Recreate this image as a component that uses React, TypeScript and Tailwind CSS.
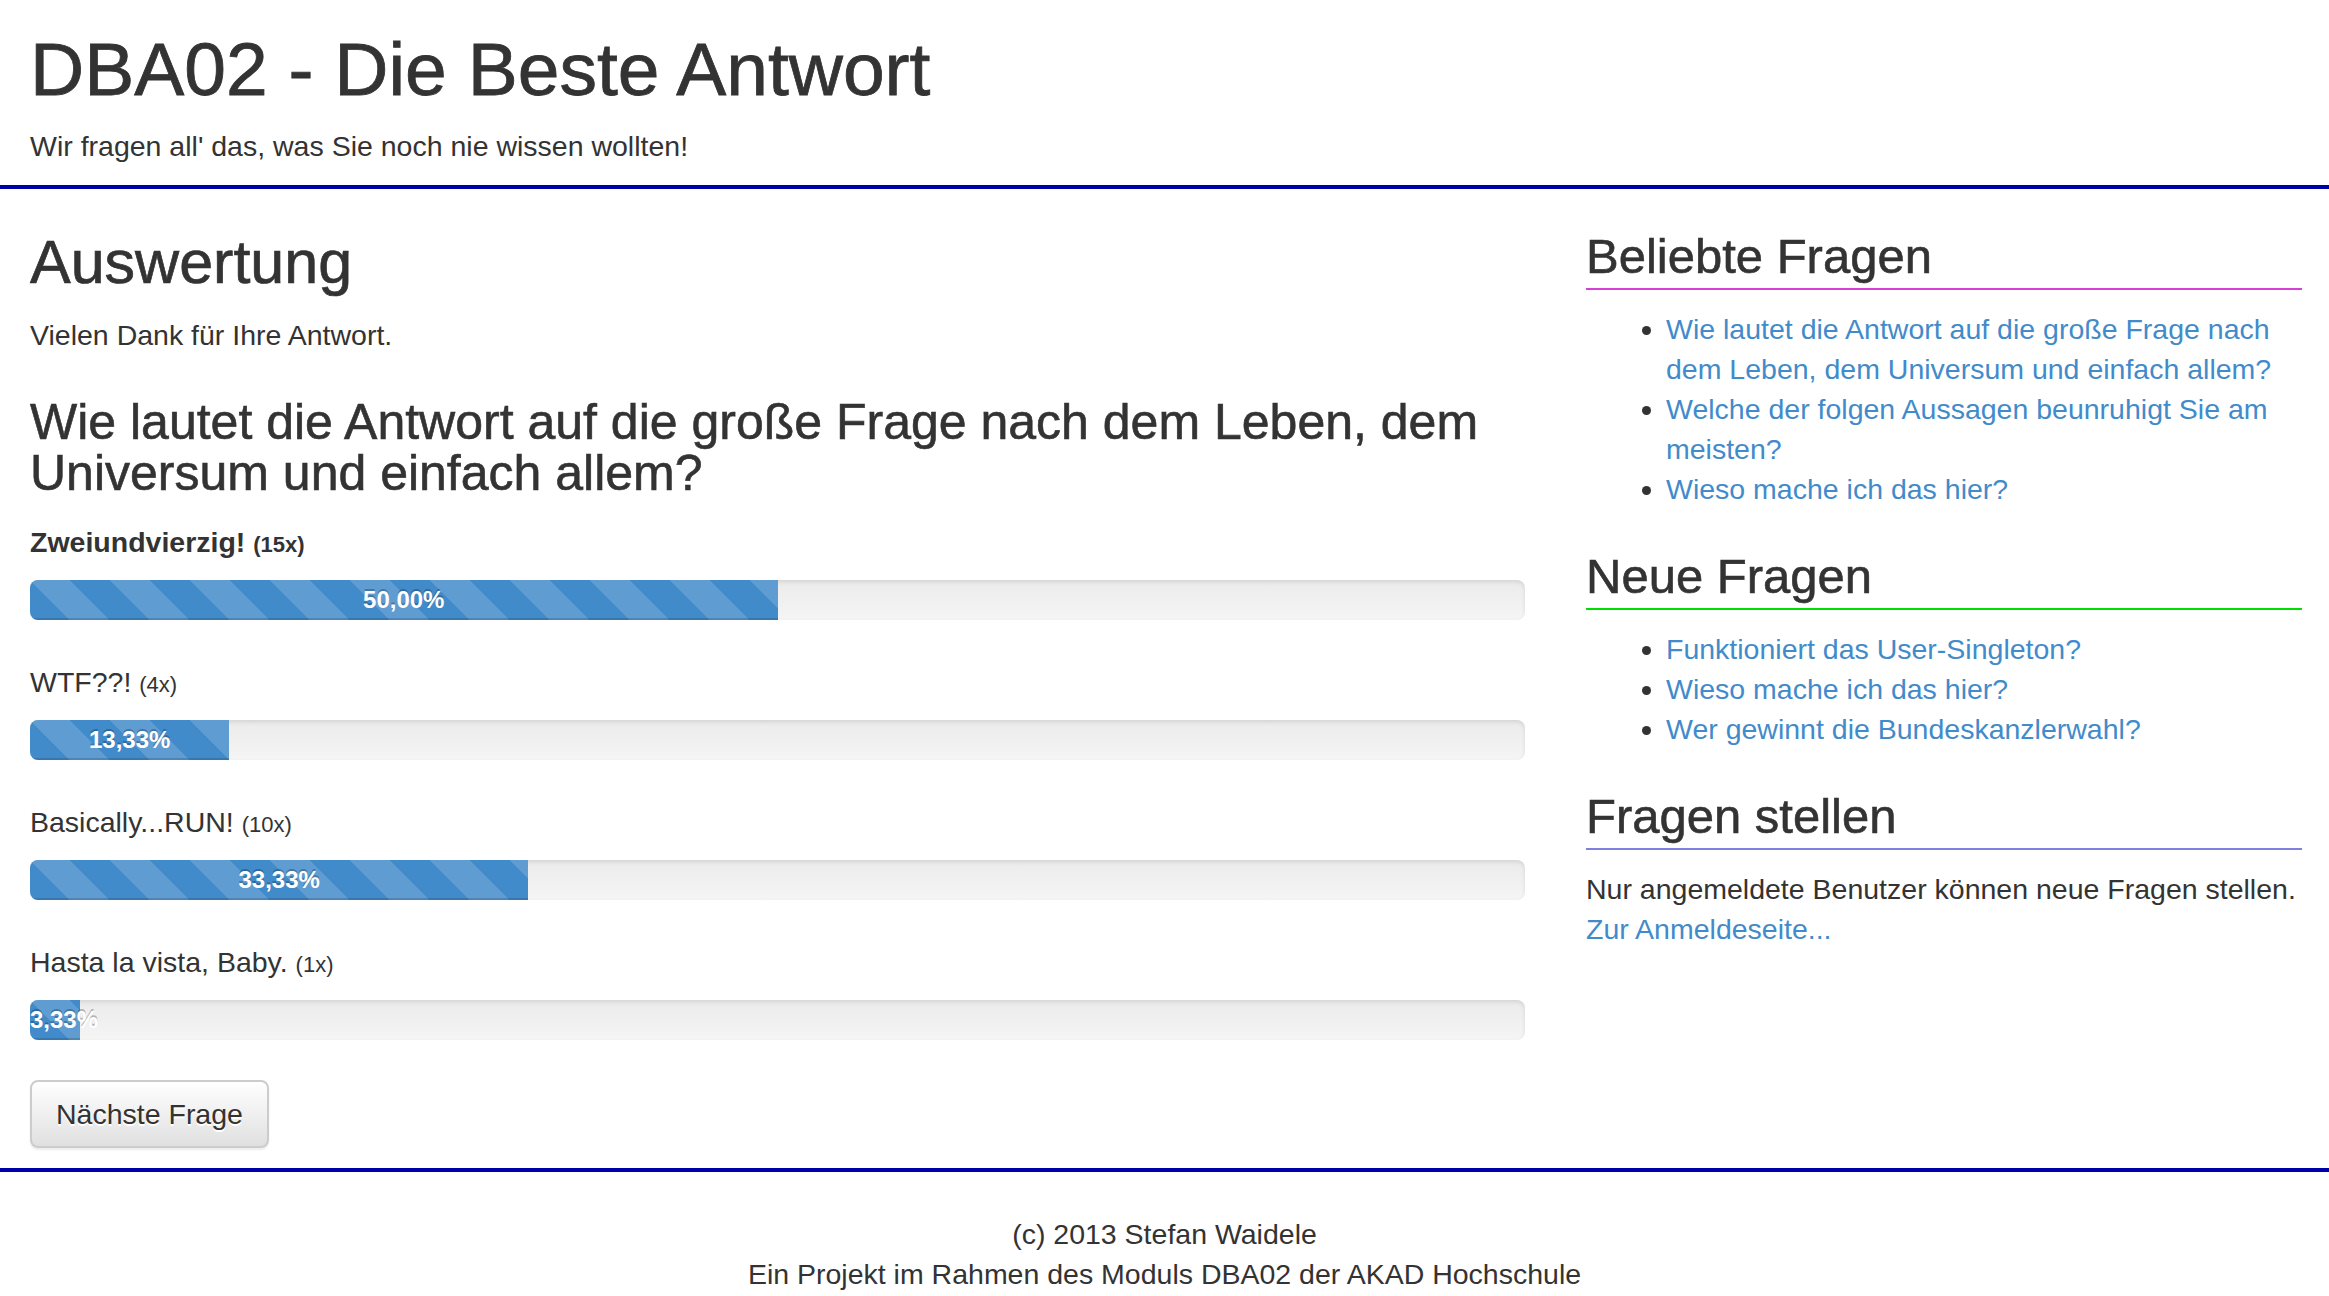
const answers = [
  { label: 'Zweiundvierzig!', count: 15, pct: 50, bold: true },
  { label: 'WTF??!', count: 4, pct: 13.33, bold: false },
  { label: 'Basically...RUN!', count: 10, pct: 33.33, bold: false },
  { label: 'Hasta la vista, Baby.', count: 1, pct: 3.33, bold: false },
];

const beliebt = [
  'Wie lautet die Antwort auf die große Frage nach dem Leben, dem Universum und einfach allem?',
  'Welche der folgen Aussagen beunruhigt Sie am meisten?',
  'Wieso mache ich das hier?',
];

const neu = ['Funktioniert das User-Singleton?', 'Wieso mache ich das hier?', 'Wer gewinnt die Bundeskanzlerwahl?'];

function fmt(n: number) {
  return n.toFixed(2).replace('.', ',') + '%';
}

function SideHeading({ children, line }: { children: string; line: string }) {
  return (
    <h3 className={`text-[49px] leading-[54px] pb-[5px] border-b-2 mb-[19px] [-webkit-text-stroke:0.6px_#333] ${line}`}>
      {children}
    </h3>
  );
}

function LinkList({ items }: { items: string[] }) {
  return (
    <ul className="list-disc pl-[80px] text-[28.5px] leading-[40px]">
      {items.map((q, i) => (
        <li key={i}>
          <a href="#" className="text-[#428bca]">
            {q}
          </a>
        </li>
      ))}
    </ul>
  );
}

export default function App() {
  return (
    <div className="min-h-screen bg-white text-[#333] [font-family:'Liberation_Sans',Arial,sans-serif]">
      <header className="px-[30px] pt-[29px] pb-[19px] border-b-4 border-[#0000aa]">
        <h1 className="text-[75px] leading-[81px] [-webkit-text-stroke:0.8px_#333]">DBA02 - Die Beste Antwort</h1>
        <p className="mt-[16px] text-[28.5px] leading-[40px]">Wir fragen all' das, was Sie noch nie wissen wollten!</p>
      </header>

      <main className="grid grid-cols-[1495px_716px] gap-x-[61px] px-[30px] pt-[40px] pb-[20px]">
        <section className="flex flex-col">
          <h2 className="text-[61px] leading-[66px] [-webkit-text-stroke:0.7px_#333]">Auswertung</h2>
          <p className="mt-[20px] text-[28.5px] leading-[40px]">Vielen Dank für Ihre Antwort.</p>
          <h3 className="mt-[42px] text-[50px] leading-[51px] [-webkit-text-stroke:0.6px_#333]">
            Wie lautet die Antwort auf die große Frage nach dem Leben, dem Universum und einfach allem?
          </h3>

          <div className="mt-[23px] flex flex-col gap-[42px]">
            {answers.map((a) => (
              <div key={a.label}>
                <div className={`h-[40px] text-[28.5px] leading-[40px] mb-[18px] ${a.bold ? 'font-bold' : ''}`}>
                  {a.label} <small className="text-[22px] leading-none">({a.count}x)</small>
                </div>
                <div className="h-[40px] rounded-[8px] overflow-hidden bg-[linear-gradient(to_bottom,#ebebeb,#f5f5f5)] shadow-[inset_0_2px_4px_rgba(0,0,0,0.1)]">
                  <div
                    className="h-full bg-[#428bca] [background-image:linear-gradient(45deg,rgba(255,255,255,0.15)_25%,transparent_25%,transparent_50%,rgba(255,255,255,0.15)_50%,rgba(255,255,255,0.15)_75%,transparent_75%,transparent)] [background-size:80px_80px] shadow-[inset_0_-2px_0_rgba(0,0,0,0.15)] text-white text-[24px] leading-[40px] text-center whitespace-nowrap font-bold [text-shadow:0_-2px_0_rgba(0,0,0,0.25)]"
                    style={{ width: `${a.pct}%` }}
                  >
                    {fmt(a.pct)}
                  </div>
                </div>
              </div>
            ))}
          </div>

          <div className="mt-[40px]">
            <button className="h-[68px] px-[24px] border-2 border-[#ccc] rounded-[8px] bg-[linear-gradient(to_bottom,#ffffff,#e0e0e0)] shadow-[inset_0_2px_0_rgba(255,255,255,0.15),0_2px_2px_rgba(0,0,0,0.075)] text-[28.5px] leading-[40px] text-[#333] [text-shadow:0_2px_0_#fff]">
              Nächste Frage
            </button>
          </div>
        </section>

        <aside className="flex flex-col">
          <SideHeading line="border-[#d83ed8]">Beliebte Fragen</SideHeading>
          <LinkList items={beliebt} />

          <div className="mt-[40px]">
            <SideHeading line="border-[#00dd00]">Neue Fragen</SideHeading>
            <LinkList items={neu} />
          </div>

          <div className="mt-[40px]">
            <SideHeading line="border-[#8080e0]">Fragen stellen</SideHeading>
            <p className="text-[28.5px] leading-[40px]">
              Nur angemeldete Benutzer können neue Fragen stellen.
              <br />
              <a href="#" className="text-[#428bca]">
                Zur Anmeldeseite...
              </a>
            </p>
          </div>
        </aside>
      </main>

      <footer className="border-t-4 border-[#0000aa] pt-[42px] text-center text-[28.5px] leading-[40px]">
        <p>(c) 2013 Stefan Waidele</p>
        <p>Ein Projekt im Rahmen des Moduls DBA02 der AKAD Hochschule</p>
      </footer>
    </div>
  );
}
